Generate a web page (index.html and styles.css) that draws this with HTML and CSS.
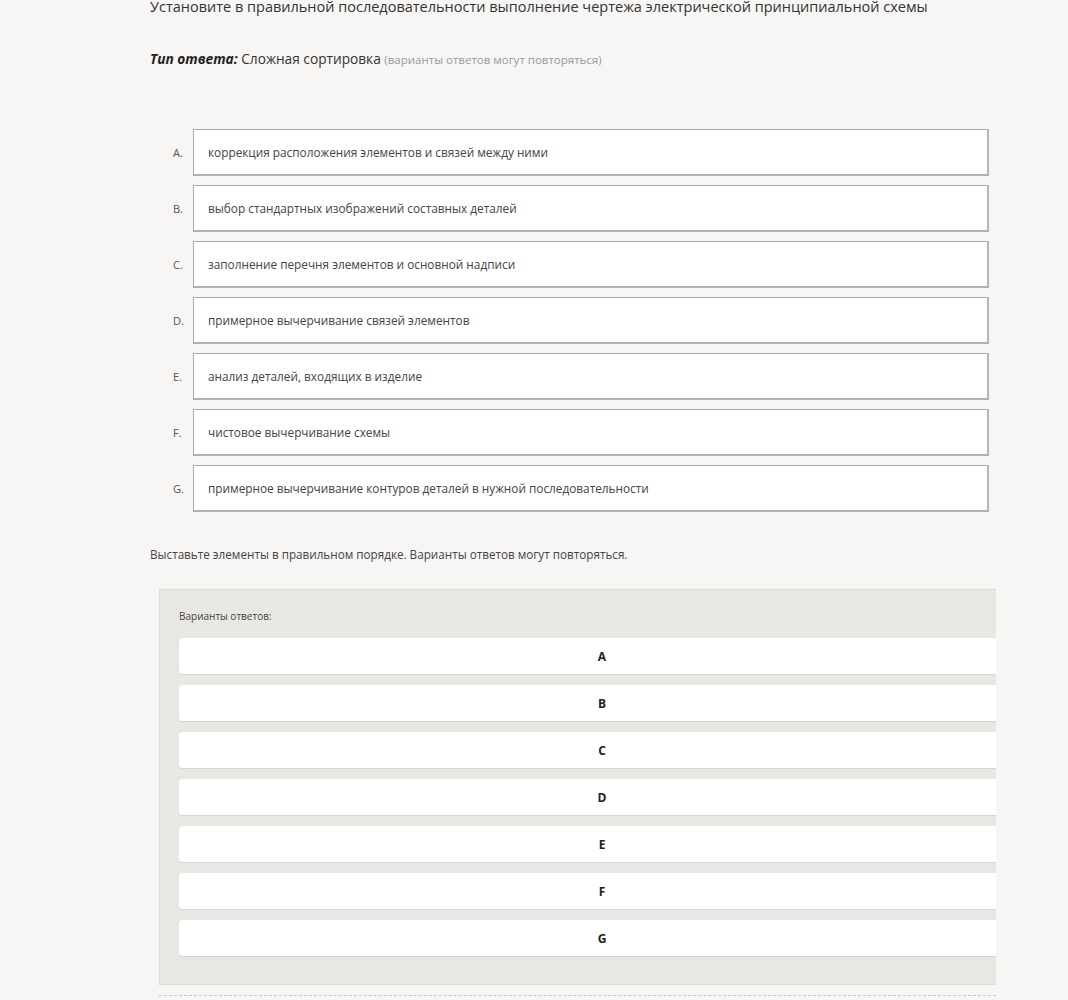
FILE: index.html
```html
<!DOCTYPE html>
<html>
<head>
    <meta charset="utf-8">
    <title>Сложная сортировка</title>
    <link rel="stylesheet" href="styles.css">
</head>
<body>
  <div class="question">
    <p class="question-title">Установите в правильной последовательности выполнение чертежа электрической принципиальной схемы</p>

    <p class="answer-type"><b>Тип ответа:</b> Сложная сортировка <span class="hint">(варианты ответов могут повторяться)</span></p>

    <!-- список элементов -->
    <div class="items">
        <div class="item"><span class="item-label">A.</span><div class="item-box">коррекция расположения элементов и связей между ними</div></div>
        <div class="item"><span class="item-label">B.</span><div class="item-box">выбор стандартных изображений составных деталей</div></div>
        <div class="item"><span class="item-label">C.</span><div class="item-box">заполнение перечня элементов и основной надписи</div></div>
        <div class="item"><span class="item-label">D.</span><div class="item-box">примерное вычерчивание связей элементов</div></div>
        <div class="item"><span class="item-label">E.</span><div class="item-box">анализ деталей, входящих в изделие</div></div>
        <div class="item"><span class="item-label">F.</span><div class="item-box">чистовое вычерчивание схемы</div></div>
        <div class="item"><span class="item-label">G.</span><div class="item-box">примерное вычерчивание контуров деталей в нужной последовательности</div></div>
    </div>

    <p class="instruction">Выставьте элементы в правильном порядке. Варианты ответов могут повторяться.</p>

    <div class="answer-area">
        <div class="variants">
            <div class="variants-title">Варианты ответов:</div>
            <div class="card">A</div>
            <div class="card">B</div>
            <div class="card">C</div>
            <div class="card">D</div>
            <div class="card">E</div>
            <div class="card">F</div>
            <div class="card">G</div>
        </div>
        <div class="dropzone"></div>
    </div>
  </div>
</body>
</html>
```

FILE: styles.css
```css
body{
    margin: 0;
    background: #f7f6f4;
    font-family: "Open Sans", "Liberation Sans", sans-serif;
    color: #333;
}
.question{
    width: 846px;
    margin-left: 150px;
}
.question-title{
    margin: -4px 0 0 0;
    font-size: 14.5px;
    line-height: 22px;
    color: #333;
}
.answer-type{
    margin: 31px 0 0 0;
    font-size: 13.7px;
    line-height: 20px;
    color: #333;
}
.answer-type b{
    font-style: italic;
    font-weight: 700;
    color: #222;
}
.hint{
    font-size: 11.5px;
    color: #999;
}
.items{
    margin-top: 59px;
    display: flex;
    flex-direction: column;
    gap: 9px;
}
.item{
    display: flex;
    align-items: center;
}
.item-label{
    width: 43px;
    padding-left: 23px;
    box-sizing: border-box;
    font-size: 11px;
    color: #555;
}
.item-box{
    width: 796px;
    height: 47px;
    box-sizing: border-box;
    border: 1px solid #aaa;
    border-right: 2px solid #b5b5b5;
    border-bottom: 2px solid #b0b0b0;
    background: #fff;
    padding: 0 14px;
    display: flex;
    align-items: center;
    font-size: 11.8px;
    color: #444;
}
.instruction{
    margin: 33px 0 0 0;
    font-size: 11.7px;
    line-height: 18px;
    color: #444;
}
.answer-area{
    margin-top: 26px;
    overflow: hidden;
}
.variants{
    margin-left: 9px;
    width: 886px;
    box-sizing: border-box;
    background: #e8e7e3;
    border: 1px solid #dcdbd7;
    padding: 19px 19px 27px 19px;
    display: flex;
    flex-direction: column;
    gap: 10px;
}
.variants-title{
    font-size: 10px;
    color: #444;
    line-height: 14px;
    margin-bottom: 5px;
}
.card{
    height: 37px;
    background: #fff;
    border-radius: 4px;
    border-bottom: 1px solid #d6d5d1;
    box-sizing: border-box;
    display: flex;
    align-items: center;
    justify-content: center;
    font-size: 12px;
    font-weight: 700;
    color: #222;
}
.dropzone{
    margin: 10px 0 0 9px;
    height: 40px;
    border-top: 1px dashed #c8c7c3;
}
```
